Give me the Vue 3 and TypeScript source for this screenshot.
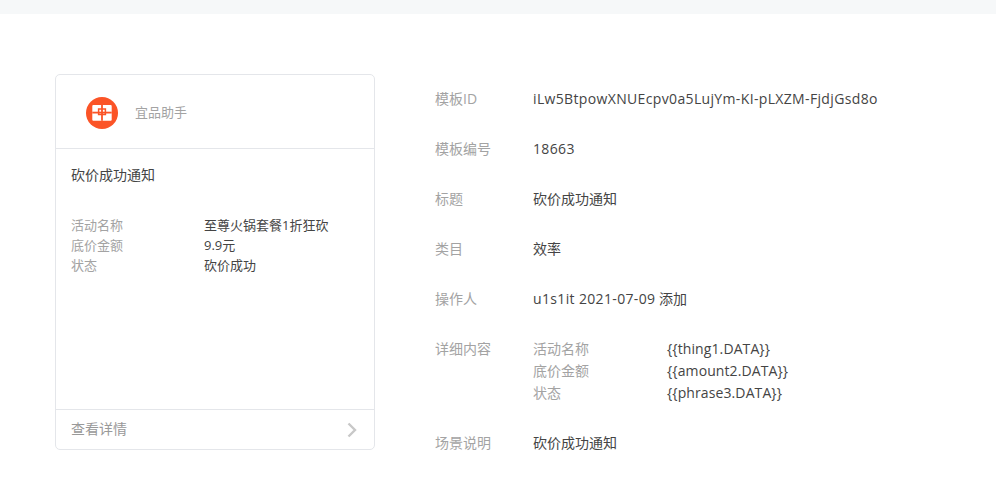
<script setup lang="ts">
const cardRows = [
  { label: '活动名称', value: '至尊火锅套餐1折狂砍' },
  { label: '底价金额', value: '9.9元' },
  { label: '状态', value: '砍价成功' },
]
const infoTop = [
  { label: '模板ID', value: 'iLw5BtpowXNUEcpv0a5LujYm-KI-pLXZM-FjdjGsd8o', latin: true },
  { label: '模板编号', value: '18663', latin: true },
  { label: '标题', value: '砍价成功通知', latin: false },
  { label: '类目', value: '效率', latin: false },
]
const detailRows = [
  { label: '活动名称', value: '{{thing1.DATA}}' },
  { label: '底价金额', value: '{{amount2.DATA}}' },
  { label: '状态', value: '{{phrase3.DATA}}' },
]
</script>

<template>
  <div class="page">
    <div class="topbar"></div>
    <main class="content">
      <section class="card">
        <header class="card-head">
          <svg class="logo" viewBox="0 0 32 32" aria-hidden="true">
            <circle cx="16" cy="16" r="16" fill="#fb5427" />
            <rect x="6.3" y="8" width="19.4" height="15.8" rx="1" fill="#fff" />
            <path d="M6.3 15.6h19.4" stroke="#fb5427" stroke-width="1.8" fill="none" />
            <path d="M16 8v15.8" stroke="#fb5427" stroke-width="1.8" fill="none" />
            <path d="M12.6 11.9h6.8v5.6h-6.8z" stroke="#fb5427" stroke-width="1.5" fill="none" />
          </svg>
          <span class="brand">宜品助手</span>
        </header>
        <div class="card-body">
          <div class="card-title">砍价成功通知</div>
          <div class="card-rows">
            <div v-for="r in cardRows" :key="r.label" class="card-row">
              <span class="card-label">{{ r.label }}</span>
              <span class="card-value">{{ r.value }}</span>
            </div>
          </div>
        </div>
        <footer class="card-foot">
          <span>查看详情</span>
          <svg class="chev" viewBox="0 0 10 16" aria-hidden="true">
            <path d="M1.5 1.5 8 8l-6.5 6.5" fill="none" stroke="#c8c8c8" stroke-width="2.4" />
          </svg>
        </footer>
      </section>
      <section class="info">
        <div v-for="r in infoTop" :key="r.label" class="info-row">
          <span class="info-label">{{ r.label }}</span>
          <span class="info-value" :class="{ latin: r.latin }">{{ r.value }}</span>
        </div>
        <div class="info-row">
          <span class="info-label">操作人</span>
          <span class="info-value"><span class="latin">u1s1it 2021-07-09</span> 添加</span>
        </div>
        <div class="info-row detail">
          <span class="info-label">详细内容</span>
          <div class="detail-list">
            <div v-for="r in detailRows" :key="r.label" class="detail-row">
              <span class="detail-label">{{ r.label }}</span>
              <span class="info-value tight">{{ r.value }}</span>
            </div>
          </div>
        </div>
        <div class="info-row">
          <span class="info-label">场景说明</span>
          <span class="info-value">砍价成功通知</span>
        </div>
      </section>
    </main>
  </div>
</template>

<style>
html, body { margin: 0; background: #fff; }
</style>

<style scoped>
.page {
  width: 996px;
  height: 497px;
  overflow: hidden;
  background: #fff;
  font-family: "Open Sans", "Noto Sans CJK SC", sans-serif;
  font-size: 13px;
  font-weight: 400;
  color: #444;
}
.topbar { height: 14px; background: #f6f8f9; }
.content {
  display: flex;
  align-items: flex-start;
  padding: 60px 0 0 55px;
}
.card {
  box-sizing: border-box;
  width: 320px;
  height: 376px;
  border: 1px solid #e4e6ea;
  border-radius: 5px;
  display: flex;
  flex-direction: column;
}
.card-head {
  box-sizing: border-box;
  height: 74px;
  flex: none;
  display: flex;
  align-items: center;
  padding: 3px 0 0 30px;
  border-bottom: 1px solid #e4e6ea;
}
.logo { width: 32px; height: 32px; flex: none; }
.brand { margin: -3px 0 0 17px; color: #a3a3a3; }
.card-body { flex: 1; padding: 16px 15px 0; }
.card-title { line-height: 20px; font-size: 14px; }
.card-rows { margin-top: 30px; }
.card-row { display: flex; line-height: 20px; }
.card-label { width: 133px; color: #a3a3a3; }
.card-foot {
  box-sizing: border-box;
  flex: none;
  height: 40px;
  display: flex;
  align-items: center;
  justify-content: space-between;
  padding: 0 17px 4px 15px;
  border-top: 1px solid #e4e6ea;
  color: #999;
  font-size: 14px;
}
.chev { width: 10px; height: 16px; margin-top: 5px; }
.info {
  margin-left: 60px;
  padding-top: 15px;
  font-size: 14px;
}
.info-row {
  display: flex;
  min-height: 20px;
  line-height: 20px;
  margin-bottom: 30px;
}
.info-label { width: 98px; flex: none; color: #a3a3a3; }
.info-value { white-space: nowrap; }
.latin { letter-spacing: 0.35px; }
.tight { letter-spacing: 0.1px; }
.detail { margin-bottom: 29px; }
.detail-row { display: flex; line-height: 22px; }
.detail-list { margin-top: -1px; }
.detail-label { width: 134px; color: #a3a3a3; }
</style>
